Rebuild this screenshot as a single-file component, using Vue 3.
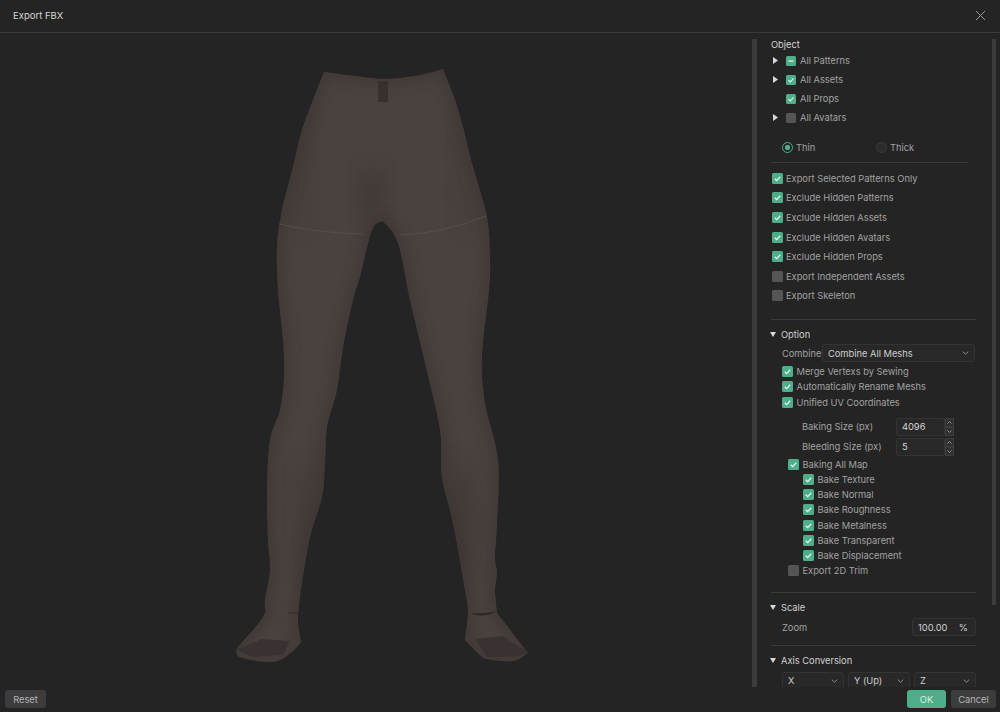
<script setup>
const treeRows = [
  { label: 'All Patterns', state: 'mixed', arrow: true },
  { label: 'All Assets', state: 'on', arrow: true },
  { label: 'All Props', state: 'on', arrow: false },
  { label: 'All Avatars', state: 'off', arrow: true }
]

const exportRows = [
  { label: 'Export Selected Patterns Only', state: 'on' },
  { label: 'Exclude Hidden Patterns', state: 'on' },
  { label: 'Exclude Hidden Assets', state: 'on' },
  { label: 'Exclude Hidden Avatars', state: 'on' },
  { label: 'Exclude Hidden Props', state: 'on' },
  { label: 'Export Independent Assets', state: 'off' },
  { label: 'Export Skeleton', state: 'off' }
]

const meshRows = ['Merge Vertexs by Sewing', 'Automatically Rename Meshs', 'Unified UV Coordinates']
const sizeRows = [
  { label: 'Baking Size (px)', value: '4096' },
  { label: 'Bleeding Size (px)', value: '5' }
]
const bakeRows = ['Bake Texture', 'Bake Normal', 'Bake Roughness', 'Bake Metalness', 'Bake Transparent', 'Bake Displacement']
const axes = ['X', 'Y (Up)', 'Z']

// outline of the mesh, split at its hard corners so each run is smoothed on its own
const outlineRuns = [
  [[324, 72], [355, 76], [387, 79], [420, 75], [443, 69]],
  [[443, 69], [455, 100], [463, 127], [473, 167], [487, 217], [490, 260], [489, 290], [482, 357], [485, 403], [498, 460], [497, 523], [495, 557], [497, 573], [495, 590], [497, 613]],
  [[497, 613], [528, 653]],
  [[528, 653], [513, 661], [487, 659], [477, 652], [465, 640]],
  [[465, 640], [468, 612], [465, 590], [453, 523], [442, 477], [440, 430], [425, 363], [410, 300], [398, 243], [383, 221]],
  [[383, 221], [372, 230], [360, 277], [353, 300], [343, 347], [337, 390], [327, 427], [325, 463], [322, 497], [310, 537], [301, 590], [298, 620], [301, 642]],
  [[301, 642], [292, 652], [273, 662], [240, 657], [237, 648]],
  [[237, 648], [263, 617], [265, 600], [270, 570], [268, 540], [267, 490], [270, 440], [280, 410], [284, 377], [283, 340], [278, 290], [277, 247], [282, 210], [293, 167], [302, 130], [313, 100], [324, 72]]
]

function smoothRun(pts) {
  let d = ''
  for (let i = 0; i < pts.length - 1; i++) {
    const p0 = pts[i - 1] || pts[i]
    const p1 = pts[i]
    const p2 = pts[i + 1]
    const p3 = pts[i + 2] || p2
    const c1x = p1[0] + (p2[0] - p0[0]) / 6
    const c1y = p1[1] + (p2[1] - p0[1]) / 6
    const c2x = p2[0] - (p3[0] - p1[0]) / 6
    const c2y = p2[1] - (p3[1] - p1[1]) / 6
    d += ` C${c1x} ${c1y} ${c2x} ${c2y} ${p2[0]} ${p2[1]}`
  }
  return d
}

const outline = `M324 72${outlineRuns.map(smoothRun).join('')} Z`
</script>

<template>
  <div class="dialog">
    <header class="titlebar">
      <span class="title">Export FBX</span>
      <svg class="close" viewBox="0 0 11 11" width="11" height="11">
        <path d="M1 1 L10 10 M10 1 L1 10" stroke="#9a9a9a" stroke-width="1" fill="none" />
      </svg>
    </header>

    <div class="body">
      <main class="viewport">
        <svg class="mesh" viewBox="0 33 752 654" width="752" height="654">
          <defs>
            <clipPath id="meshClip"><path :d="outline" /></clipPath>
            <filter id="soft" x="-30%" y="-30%" width="160%" height="160%"><feGaussianBlur stdDeviation="6" /></filter>
            <filter id="softer" x="-50%" y="-50%" width="200%" height="200%"><feGaussianBlur stdDeviation="10" /></filter>
          </defs>
          <path :d="outline" fill="#4a423f" />
          <g clip-path="url(#meshClip)">
            <!-- shading along the edges and under the belly -->
            <path :d="outline" fill="none" stroke="#393230" stroke-width="12" opacity="0.55" filter="url(#soft)" />
            <ellipse cx="372" cy="195" rx="12" ry="26" fill="#3a3330" opacity="0.55" filter="url(#softer)" />
            <ellipse cx="300" cy="170" rx="10" ry="60" fill="#3f3734" opacity="0.35" filter="url(#softer)" />
            <ellipse cx="465" cy="170" rx="10" ry="60" fill="#3f3734" opacity="0.35" filter="url(#softer)" />
            <ellipse cx="460" cy="520" rx="14" ry="60" fill="#3a3330" opacity="0.4" filter="url(#softer)" />
            <ellipse cx="310" cy="520" rx="14" ry="60" fill="#3a3330" opacity="0.3" filter="url(#softer)" />
            <!-- seams -->
            <path d="M278 224 Q320 233 363 234 M400 235 Q445 233 486 216" stroke="#5a504b" stroke-width="0.8" fill="none" />
            <!-- soles -->
            <path d="M262 639 L290 641 L283 655 L253 657 L237 650 Z" fill="#393231" />
            <path d="M475 639 L503 636 L528 653 L513 657 L487 657 Z" fill="#393231" />
            <path d="M237 650 L253 657 L283 655 L290 641 L301 642 L292 652 L273 662 L240 657 Z" fill="#443c3a" />
          </g>
          <path d="M378 81 H388 V102 H378 Z" fill="#38302c" />
          <path d="M470 613 Q485 614 497 611 Q487 617 476 615 Z" fill="#2e2725" />
          <path d="M288 613 H298" stroke="#332b29" stroke-width="1" fill="none" />
        </svg>
      </main>

      <aside class="sidebar">
        <div class="scrollbar"></div>
        <div class="panel">
          <div class="heading">Object</div>
          <div v-for="row in treeRows" :key="row.label" class="tree-row">
            <span class="arrow-slot">
              <svg v-if="row.arrow" viewBox="0 0 5 7" width="5" height="7"><path d="M0 0 L5 3.5 L0 7 Z" fill="#d8d8d8" /></svg>
            </span>
            <span class="check small" :class="row.state">
              <svg v-if="row.state === 'on'" viewBox="0 0 10 10"><path d="M2.5 5.2 L4.3 7 L7.5 3.4" stroke="#e6f5ef" stroke-width="1.1" fill="none" /></svg>
              <svg v-if="row.state === 'mixed'" viewBox="0 0 10 10"><path d="M2.5 5 H7.5" stroke="#e6f5ef" stroke-width="1.2" fill="none" /></svg>
            </span>
            <span class="label">{{ row.label }}</span>
          </div>

          <div class="radio-row">
            <span class="radio-item">
              <span class="radio active"></span>
              <span class="label">Thin</span>
            </span>
            <span class="radio-item">
              <span class="radio"></span>
              <span class="label">Thick</span>
            </span>
          </div>
          <div class="divider short"></div>

          <div class="export-list">
            <div v-for="row in exportRows" :key="row.label" class="export-row">
              <span class="check" :class="row.state">
                <svg v-if="row.state === 'on'" viewBox="0 0 10 10"><path d="M2.5 5.2 L4.3 7 L7.5 3.4" stroke="#e6f5ef" stroke-width="1.1" fill="none" /></svg>
              </span>
              <span class="label">{{ row.label }}</span>
            </div>
          </div>
          <div class="divider option-gap"></div>

          <div class="section-head first">
            <svg viewBox="0 0 6 5" width="6" height="5"><path d="M0 0 H6 L3 5 Z" fill="#d8d8d8" /></svg>
            <span>Option</span>
          </div>
          <div class="combine-row">
            <span class="label combine-label">Combine</span>
            <span class="select combine">
              <span>Combine All Meshs</span>
              <svg viewBox="0 0 7 4" width="7" height="4"><path d="M0.8 0.6 L3.5 3.2 L6.2 0.6" stroke="#8f8f8f" fill="none" /></svg>
            </span>
          </div>
          <div class="mesh-list">
            <div v-for="label in meshRows" :key="label" class="tight-row indent">
              <span class="check on"><svg viewBox="0 0 10 10"><path d="M2.5 5.2 L4.3 7 L7.5 3.4" stroke="#e6f5ef" stroke-width="1.1" fill="none" /></svg></span>
              <span class="label">{{ label }}</span>
            </div>
          </div>

          <div class="size-list">
            <div v-for="row in sizeRows" :key="row.label" class="size-row">
              <span class="label size-label">{{ row.label }}</span>
              <span class="field">{{ row.value }}</span>
              <span class="spinner">
                <svg viewBox="0 0 9 18" width="9" height="18">
                  <rect x="0.5" y="0.5" width="8" height="8" fill="#303030" stroke="#3d3d3d" />
                  <rect x="0.5" y="9.5" width="8" height="8" fill="#303030" stroke="#3d3d3d" />
                  <path d="M2.5 5.5 L4.5 3.5 L6.5 5.5 M2.5 12.5 L4.5 14.5 L6.5 12.5" stroke="#8f8f8f" fill="none" />
                </svg>
              </span>
            </div>
          </div>

          <div class="bake-list">
            <div class="tight-row bake-parent">
              <span class="check on"><svg viewBox="0 0 10 10"><path d="M2.5 5.2 L4.3 7 L7.5 3.4" stroke="#e6f5ef" stroke-width="1.1" fill="none" /></svg></span>
              <span class="label">Baking All Map</span>
            </div>
            <div v-for="label in bakeRows" :key="label" class="tight-row bake-child">
              <span class="check on"><svg viewBox="0 0 10 10"><path d="M2.5 5.2 L4.3 7 L7.5 3.4" stroke="#e6f5ef" stroke-width="1.1" fill="none" /></svg></span>
              <span class="label">{{ label }}</span>
            </div>
            <div class="tight-row bake-parent">
              <span class="check off"></span>
              <span class="label">Export 2D Trim</span>
            </div>
          </div>
          <div class="divider scale-gap"></div>

          <div class="section-head scale-head">
            <svg viewBox="0 0 6 5" width="6" height="5"><path d="M0 0 H6 L3 5 Z" fill="#d8d8d8" /></svg>
            <span>Scale</span>
          </div>
          <div class="zoom-row">
            <span class="label">Zoom</span>
            <span class="zoom-field">
              <span>100.00</span>
              <span>%</span>
            </span>
          </div>
          <div class="divider axis-gap"></div>

          <div class="section-head scale-head">
            <svg viewBox="0 0 6 5" width="6" height="5"><path d="M0 0 H6 L3 5 Z" fill="#d8d8d8" /></svg>
            <span>Axis Conversion</span>
          </div>
          <div class="axis-row">
            <span v-for="axis in axes" :key="axis" class="select">
              <span>{{ axis }}</span>
              <svg viewBox="0 0 7 4" width="7" height="4"><path d="M0.8 0.6 L3.5 3.2 L6.2 0.6" stroke="#8f8f8f" fill="none" /></svg>
            </span>
          </div>
        </div>
        <div class="scrollbar right"></div>
      </aside>
    </div>

    <footer class="footer">
      <button class="btn reset">Reset</button>
      <span class="actions">
        <button class="btn ok">OK</button>
        <button class="btn cancel">Cancel</button>
      </span>
    </footer>
  </div>
</template>

<style scoped>
.dialog {
  width: 1000px;
  height: 712px;
  display: flex;
  flex-direction: column;
  background: #242424;
  font-family: Inter, "Open Sans", sans-serif;
  font-size: 9.3px;
  color: #a2a2a2;
  overflow: hidden;
}

.titlebar {
  height: 33px;
  flex: none;
  box-sizing: border-box;
  display: flex;
  align-items: center;
  justify-content: space-between;
  padding: 0 14px 1px 13px;
  border-bottom: 1px solid #3a3a3a;
}

.title {
  color: #d6d6d6;
  font-size: 9.5px;
}

.body {
  flex: none;
  height: 654px;
  display: flex;
}

.viewport {
  width: 752px;
  flex: none;
}

.mesh {
  display: block;
}

.sidebar {
  width: 248px;
  flex: none;
  display: flex;
  overflow: hidden;
  padding-top: 6px;
  box-sizing: border-box;
}

.scrollbar {
  width: 5px;
  flex: none;
  height: 648px;
  background: #3c3c3c;
}

.scrollbar.right {
  height: 566px;
  width: 4px;
  margin-left: 16px;
}

.panel {
  width: 205px;
  flex: none;
  margin-left: 14px;
}

.heading {
  height: 12px;
  line-height: 12px;
  color: #d6d6d6;
}

.tree-row {
  height: 19px;
  display: flex;
  align-items: center;
}

.arrow-slot {
  width: 15px;
  flex: none;
  display: flex;
  padding-left: 2px;
  box-sizing: border-box;
}

.check {
  width: 11px;
  height: 11px;
  flex: none;
  border-radius: 1.5px;
  display: block;
}

.check svg {
  display: block;
  width: 100%;
  height: 100%;
}

.check.small {
  width: 10px;
  height: 10px;
}

.check.on,
.check.mixed {
  background: #4fae8a;
}

.check.off {
  background: #555;
}

.label {
  white-space: nowrap;
}

.tree-row .label {
  margin-left: 4px;
}

.radio-row {
  margin-top: 11px;
  height: 19px;
  display: flex;
  align-items: center;
  padding-left: 11px;
}

.radio-item {
  width: 94px;
  display: flex;
  align-items: center;
  gap: 3px;
}

.radio {
  width: 9px;
  height: 9px;
  border-radius: 50%;
  border: 1px solid #3d3d3d;
  background: #2c2c2c;
}

.radio.active {
  border-color: #4fae8a;
  background: radial-gradient(circle, #4fae8a 0 2.5px, #242424 3px);
}

.divider {
  height: 1px;
  background: #3a3a3a;
}

.divider.short {
  margin-top: 5px;
  width: 197px;
}

.export-list {
  margin-top: 5.5px;
  padding-left: 1px;
}

.export-row {
  height: 19.6px;
  display: flex;
  align-items: center;
  gap: 3px;
}

.divider.option-gap {
  margin-top: 13.5px;
}

.section-head {
  height: 14px;
  display: flex;
  align-items: center;
  gap: 5px;
  margin-left: -1px;
  color: #cfcfcf;
}

.section-head.first {
  margin-top: 7px;
}

.section-head.scale-head {
  margin-top: 8px;
}

.combine-row {
  margin-top: 3px;
  height: 18px;
  display: flex;
  align-items: center;
  padding-left: 11px;
}

.combine-label {
  width: 40px;
  flex: none;
}

.select {
  flex: 1;
  height: 18px;
  box-sizing: border-box;
  display: flex;
  align-items: center;
  justify-content: space-between;
  padding: 0 5px;
  border: 1px solid #333;
  border-radius: 3px;
  background: #282828;
  color: #cfcfcf;
}

.select.combine {
  flex: none;
  width: 153px;
}

.mesh-list {
  margin-top: 2px;
}

.tight-row {
  height: 15.2px;
  display: flex;
  align-items: center;
  gap: 3.5px;
}

.tight-row.indent {
  padding-left: 11px;
}

.size-list {
  margin-top: 8px;
  display: flex;
  flex-direction: column;
  gap: 2px;
}

.size-row {
  height: 18px;
  display: flex;
  align-items: center;
}

.size-label {
  width: 125px;
  padding-left: 31px;
  box-sizing: border-box;
  flex: none;
}

.field {
  width: 49px;
  height: 18px;
  box-sizing: border-box;
  line-height: 16px;
  padding-left: 5px;
  border: 1px solid #333;
  border-radius: 2px;
  background: #282828;
  color: #d6d6d6;
}

.spinner {
  display: block;
  height: 18px;
}

.spinner svg {
  display: block;
}

.bake-list {
  margin-top: 1px;
}

.bake-parent {
  padding-left: 17px;
}

.bake-child {
  padding-left: 32px;
}

.divider.scale-gap {
  margin-top: 13.5px;
}

.zoom-row {
  margin-top: 3.5px;
  height: 18px;
  display: flex;
  align-items: center;
  justify-content: space-between;
  padding-left: 11px;
}

.zoom-field {
  width: 64px;
  height: 18px;
  box-sizing: border-box;
  display: flex;
  align-items: center;
  justify-content: space-between;
  padding: 0 7px 0 5px;
  border: 1px solid #333;
  border-radius: 3px;
  background: #282828;
  color: #cfcfcf;
}

.divider.axis-gap {
  margin-top: 8.5px;
}

.axis-row {
  margin-top: 4px;
  display: flex;
  gap: 4px;
  padding-left: 11px;
}

.footer {
  flex: 1;
  display: flex;
  justify-content: space-between;
  padding: 3px 4px 0 5px;
  box-sizing: border-box;
}

.actions {
  display: flex;
  gap: 5px;
}

.btn {
  height: 18px;
  border: 0;
  border-radius: 3px;
  padding: 0;
  font: inherit;
  color: #b4b4b4;
  background: #3c3c3c;
}

.reset {
  width: 41px;
}

.ok {
  width: 39px;
  background: #4fae8a;
  color: #d4eee4;
}

.cancel {
  width: 45px;
}
</style>
